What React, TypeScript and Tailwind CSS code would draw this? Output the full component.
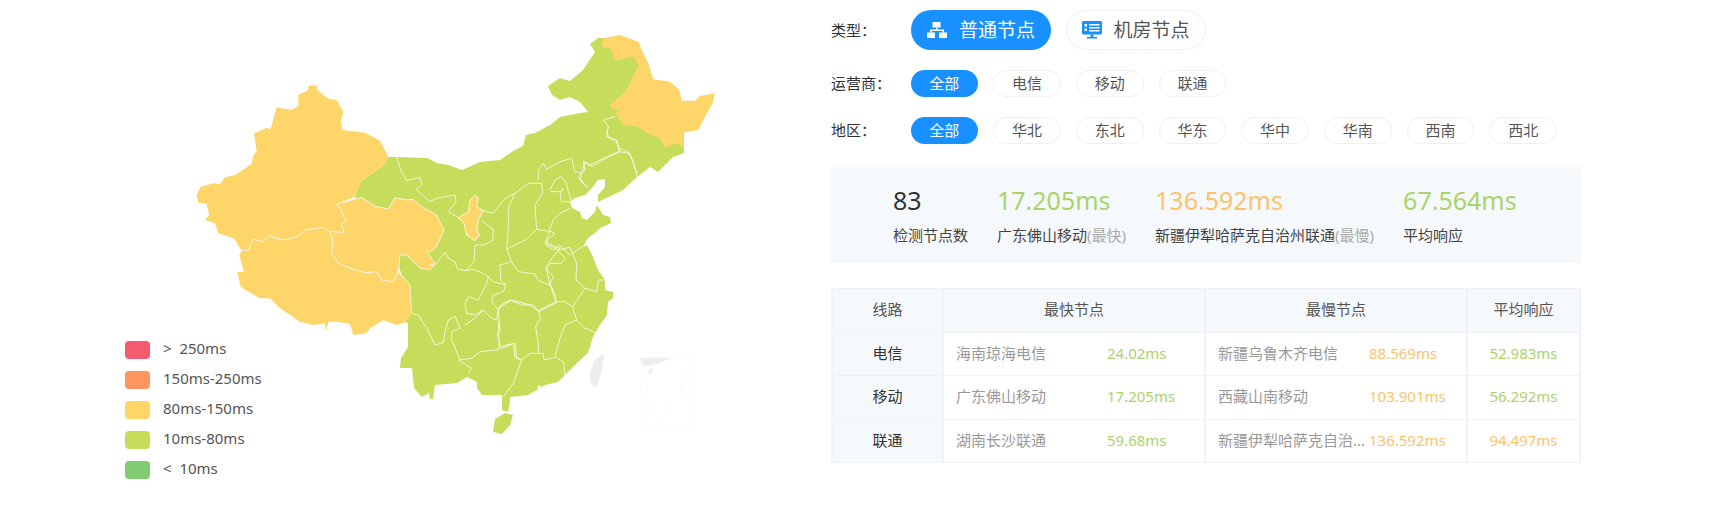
const font = { fontFamily: '"Noto Sans", "Noto Sans CJK SC", sans-serif' }

const LAND =
  "388,157 397,157 427,158 437,163 448,165 462,170 480,162 500,160 510,153 515,150 523,146 526,135 535,133 550,125 560,117 580,113 588,112 580,102 570,97 560,100 552,95 548,86 560,78 570,81 583,70 595,52 590,44 598,38 603,38 620,45 635,50 645,65 650,85 684,130 684,153 673,157 670,160 658,172 650,167 637,177 623,190 598,202 598,195 605,187 605,179 598,180 592,188 585,195 575,198 570,202 572,208 580,212 582,218 587,220 595,212 597,205 603,215 610,217 611,223 600,228 595,233 588,238 583,247 587,245 593,257 598,270 605,280 605,290 613,292 613,298 608,302 607,315 598,328 593,337 588,353 577,363 565,375 558,382 545,385 537,390 528,395 510,397 510,403 508,412 502,410 502,395 493,395 482,395 477,388 477,382 467,377 457,383 435,385 433,399 430,399 429,393 422,397 414,388 412,368 400,368 401,358 408,347 408,323 405,322 410,300 400,270 375,220 355,197 361,181 370,175 384,165"

const HAINAN = "495,419 505,413 513,415 510,425 502,434 493,432"

// west: frame of the crop at 180,20
const XINJIANG =
  "385,197 410,196 412,210 430,225 445,236 470,240 490,275 483,305 487,330 555,338 600,362 625,410 612,435 570,465 545,482 525,530 470,552 480,565 498,602 485,612 493,637 450,635 430,622 375,630 355,648 320,660 285,655 270,645 250,665 220,658 205,690 185,692 165,660 160,655 115,640 105,610 75,600 88,585 80,552 55,548 50,525 62,500 100,490 120,492 135,472 165,465 215,432 220,405 230,395 222,340 262,323 272,328 290,262 335,270 355,258 355,225 385,210"
const TIBET =
  "185,692 205,690 220,658 250,665 270,645 285,655 320,660 355,648 375,630 430,622 450,635 458,660 455,700 475,730 510,745 555,758 590,755 605,780 640,785 655,755 690,795 695,880 680,905 650,915 610,900 570,925 560,940 520,945 510,912 470,905 445,905 438,935 435,910 400,915 360,905 330,885 300,865 270,835 240,835 205,815 182,800 172,755 192,755 178,705"
const QINGHAI =
  "470,552 545,532 575,552 590,560 625,567 645,533 680,540 700,538 725,560 770,585 792,630 770,680 750,695 740,695 765,730 750,750 720,745 680,705 660,705 655,755 640,785 605,780 590,755 555,758 510,745 475,730 455,700 458,660 450,635 493,637 485,612 498,602 480,565"

// north east: frame of the crop at 560,20
const HEILONGJIANG =
  "130,55 180,45 235,65 250,100 265,130 280,178 330,185 358,210 365,242 405,242 420,228 465,220 458,250 435,290 415,330 370,338 372,385 350,370 315,382 300,355 270,345 235,320 190,315 165,280 180,270 160,270 150,255 195,215 205,200 235,135 220,110 165,122 150,85 125,80"
const NE_LINES = [
  "130,300 145,320 140,350 170,365 175,385 180,395 205,400 220,425 232,470",
  "180,395 150,408 95,440 70,425 75,450 55,470 80,500",
  "130,300 165,290",
]

// centre and south west: frame of the crop at 340,150
const NINGXIA =
  "405,135 415,145 410,170 430,182 415,210 410,240 418,255 405,272 380,255 372,220 355,203 385,185 390,150"
const CENTRE_LINES = [
  "170,22 183,62 200,92 240,82 245,105 228,118 270,155 290,145 345,135 348,155 325,185 355,203",
  "270,345 285,345 300,325 315,308 325,325 345,335 352,357 378,362 395,358 420,365 445,380 458,395 498,405 490,425 460,435 455,455 475,480 470,510 455,505 430,480 405,495 380,490 375,460 385,440 415,450 440,400 445,380",
  "378,362 402,335 405,285 430,285 458,272 460,238 425,212",
  "430,182 460,190 495,145 525,130 565,100 605,100 608,130 585,165 590,238 560,268 500,297",
  "525,130 505,175 505,235 500,295 515,335 480,345 482,390 498,405",
  "515,335 535,365 585,372 595,392 630,405 650,458 595,485 580,465 545,465 510,450 482,465 475,480",
  "590,238 630,245 615,278 660,295 640,320 618,350 630,405",
  "475,515 478,590 470,600 420,605 395,625 360,630 350,605 335,570 335,545 360,535 345,498 325,510 315,545 310,578 285,585 260,535 235,495 215,490",
  "375,525 405,505 430,480",
  "355,630 395,655 385,670",
  "470,600 525,580 530,625 545,630 520,700 490,740",
]

// north china: frame of the crop at 520,130
const NORTH_LINES = [
  "55,150 55,120 70,100 80,118 120,95 155,85 165,125 185,130 180,150 205,175",
  "90,180 105,150 122,140 140,160 145,185 155,215 125,215 120,195 130,175 120,185 90,185",
  "185,130 195,95 210,105 240,90 295,65 300,55 330,70 350,130",
  "260,0 265,20 290,30 298,55",
  "150,235 120,250 100,270 88,300 105,312 85,325 78,345 100,360 118,345 150,375 190,348",
]

// south east: frame of the crop at 470,240
const SOUTH_LINES = [
  "232,10 262,30 300,22 310,45 320,70 318,120 345,145 380,155 385,120 405,120",
  "262,30 285,55 275,70 240,70 228,88 250,110 240,130 255,165 258,185 285,185 308,200 345,145",
  "308,200 320,240 345,265 370,275 378,285",
  "320,240 285,255 270,295 255,350 280,365 285,405",
  "258,185 205,212 212,235 197,260 205,310 205,340 220,340 222,360 255,352",
  "85,205 125,180 180,195 205,212",
  "85,205 90,270 82,285 92,320 130,310 135,350 155,360 180,340 205,340",
]

const ISLANDS = [
  "640,358 671,358 660,363 648,366 643,366",
  "650,368 654,369 650,375 648,373",
]

const SEA_MARKS = ["683,368 681,380", "681,385 680,395", "650,412 655,405", "672,402 666,412", "646,385 648,390", "658,424 664,421"]

function Lines({ items }: { items: string[] }) {
  return (
    <>
      {items.map((points) => (
        <polyline key={points} points={points} fill="none" stroke="#fff" strokeOpacity="0.85" strokeWidth="2.6" strokeLinejoin="round" />
      ))}
    </>
  )
}

function ChinaMap() {
  return (
    <svg viewBox="0 0 831 508" className="block h-[508px] w-[831px]">
      <polygon points={LAND} fill="#c5dd5a" />
      <polygon points={HAINAN} fill="#c5dd5a" />
      <g transform="translate(180 20) scale(0.3333)" fill="#fdd568" stroke="#fff" strokeOpacity="0.85" strokeWidth="2.6" strokeLinejoin="round">
        <polygon points={XINJIANG} strokeOpacity="0" />
        <polygon points={TIBET} strokeOpacity="0" />
        <polygon points={QINGHAI} strokeOpacity="0" />
        <polyline fill="none" points="470,552 545,532 575,552 590,560 625,567 645,533 680,540 700,538 725,560 770,585 792,630 770,680 750,695 740,695 765,730 750,750 720,745 680,705 660,705 655,755 640,785 605,780 590,755 555,758 510,745 475,730 455,700 458,660 450,635 493,637 485,612 498,602 480,565 470,552" />
        <polyline fill="none" points="185,692 205,690 220,658 250,665 270,645 285,655 320,660 355,648 375,630 430,622 450,635" />
        <polyline fill="none" points="655,755 690,795 695,880" />
      </g>
      <g transform="translate(560 20) scale(0.3333)">
        <polygon points={HEILONGJIANG} fill="#fdd568" />
        <Lines items={NE_LINES} />
      </g>
      <g transform="translate(340 150) scale(0.3333)">
        <polygon points={NINGXIA} fill="#fdd568" stroke="#fff" strokeWidth="2.6" />
        <Lines items={CENTRE_LINES} />
        <circle cx="598" cy="712" r="6" fill="#eef2f2" />
      </g>
      <g transform="translate(520 130) scale(0.3333)">
        <Lines items={NORTH_LINES} />
      </g>
      <g transform="translate(470 240) scale(0.3333)">
        <Lines items={SOUTH_LINES} />
        <polygon points="395,345 403,345 395,395 378,445 360,425 360,395 375,360" fill="#eeeeee" />
      </g>
      <rect x="640.5" y="357.5" width="51" height="74" fill="none" stroke="#fafafa" />
      {ISLANDS.map((points) => (
        <polygon key={points} points={points} fill="#eeeeee" />
      ))}
      {SEA_MARKS.map((points) => (
        <polyline key={points} points={points} fill="none" stroke="#fbfbfb" />
      ))}
    </svg>
  )
}

const LEGEND = [
  { color: "bg-[#f55a6e]", label: "> 250ms" },
  { color: "bg-[#ff9560]", label: "150ms-250ms" },
  { color: "bg-[#ffd568]", label: "80ms-150ms" },
  { color: "bg-[#c5dd5a]", label: "10ms-80ms" },
  { color: "bg-[#80cc70]", label: "< 10ms" },
]

function Legend() {
  return (
    <div className="absolute left-[125px] top-[341px] flex flex-col gap-[12px]">
      {LEGEND.map((item) => (
        <div key={item.label} className="flex h-[18px] items-center gap-[13px]">
          <span className={`h-[18px] w-[25px] rounded ${item.color}`} />
          <span className="whitespace-pre pb-[4px] text-[15px] text-[#555]">{item.label.replace(" ", "  ")}</span>
        </div>
      ))}
    </div>
  )
}

function Chip({ label, active }: { label: string; active?: boolean }) {
  return (
    <span
      className={
        active
          ? "flex h-[27px] w-[67.7px] items-center justify-center rounded-full bg-[#1890ff] text-[15px] text-white"
          : "flex h-[27px] w-[67.7px] items-center justify-center rounded-full border border-[#f0f0f0] text-[15px] text-[#555]"
      }
    >
      {label}
    </span>
  )
}

function ChipRow({ label, chips }: { label: string; chips: string[] }) {
  return (
    <div className="flex items-center">
      <span className="w-[79.500px] text-[15px] text-[#333]">{label}</span>
      <div className="flex gap-[15px]">
        <Chip label="全部" active />
        {chips.map((chip) => (
          <Chip key={chip} label={chip} />
        ))}
      </div>
    </div>
  )
}

function SitemapIcon() {
  return (
    <svg viewBox="0 0 20 16" className="h-[16px] w-[20px]" fill="currentColor">
      <rect x="5.5" y="0" width="8" height="5.5" />
      <rect x="0" y="10.5" width="8" height="5.5" />
      <rect x="12" y="10.5" width="8" height="5.5" />
      <path d="M9 5.5h1.5V7.5H17v3h-1.5V9h-11v1.500H3v-3h6z" />
    </svg>
  )
}

function MonitorIcon() {
  return (
    <svg viewBox="0 0 20 18" className="h-[18px] w-[20px]">
      <rect x="0" y="0" width="20" height="13.500" rx="1.500" fill="#1890ff" />
      <rect x="8.500" y="13.500" width="3" height="2.500" fill="#1890ff" />
      <rect x="5" y="16" width="10" height="1.500" fill="#1890ff" />
      <rect x="2.500" y="3" width="2.500" height="2.500" fill="#fff" />
      <rect x="2.500" y="7.500" width="2.500" height="2.500" fill="#fff" />
      <rect x="7" y="3" width="10.500" height="1.500" fill="#fff" />
      <rect x="7" y="6" width="10.500" height="1.500" fill="#fff" />
      <rect x="7" y="9" width="10.500" height="1.500" fill="#fff" />
    </svg>
  )
}

const STATS = [
  { value: "83", color: "text-[#333]", name: "检测节点数" },
  { value: "17.205ms", color: "text-[#a9d46a]", name: "广东佛山移动", note: "(最快)" },
  { value: "136.592ms", color: "text-[#fcc36b]", name: "新疆伊犁哈萨克自治州联通", note: "(最慢)" },
  { value: "67.564ms", color: "text-[#a9d46a]", name: "平均响应" },
]

const green = "text-[#a9d46a]"
const orange = "text-[#fcc36b]"

const ROWS = [
  { line: "电信", fast: "海南琼海电信", fastMs: "24.02ms", slow: "新疆乌鲁木齐电信", slowMs: "88.569ms", avg: "52.983ms", avgColor: green },
  { line: "移动", fast: "广东佛山移动", fastMs: "17.205ms", slow: "西藏山南移动", slowMs: "103.901ms", avg: "56.292ms", avgColor: green },
  { line: "联通", fast: "湖南长沙联通", fastMs: "59.68ms", slow: "新疆伊犁哈萨克自治州联通", slowMs: "136.592ms", avg: "94.497ms", avgColor: orange },
]

function NodeCell({ name, ms, color }: { name: string; ms: string; color: string }) {
  return (
    <td className="border-x-2 border-y border-[#f0f2f5] pb-[2px] pl-[12px]">
      <div className="flex items-center">
        <span className="w-[151px] truncate pr-[3px] text-[#999]">{name}</span>
        <span className={color}>{ms}</span>
      </div>
    </td>
  )
}

export default function App() {
  return (
    <div className="flex h-[508px] w-[1717px] bg-white" style={font}>
      <div className="relative w-[831px]">
        <ChinaMap />
        <Legend />
      </div>

      <div className="flex w-[750px] flex-col pt-[10px]">
        <div className="flex items-center">
          <span className="w-[80px] text-[15px] text-[#333]">类型：</span>
          <div className="flex gap-[15px]">
            <span className="flex h-[40px] w-[140px] items-center justify-center gap-[12px] rounded-full bg-[#1890ff] text-[19px] text-white">
              <SitemapIcon />
              普通节点
            </span>
            <span className="flex h-[40px] w-[140px] items-center justify-center gap-[11px] rounded-full border border-[#f0f0f0] text-[19px] text-[#555]">
              <MonitorIcon />
              机房节点
            </span>
          </div>
        </div>

        <div className="mt-[20px]">
          <ChipRow label="运营商：" chips={["电信", "移动", "联通"]} />
        </div>
        <div className="mt-[20px]">
          <ChipRow label="地区：" chips={["华北", "东北", "华东", "华中", "华南", "西南", "西北"]} />
        </div>

        <div className="mt-[23px] flex h-[96px] items-center gap-[29px] bg-[#f6f9fc] pb-[4px] pl-[62px]">
          {STATS.map((stat) => (
            <div key={stat.name} className="flex flex-col">
              <span className={`text-[25px] leading-[36px] ${stat.color}`}>{stat.value}</span>
              <span className="mt-[7px] text-[15px] leading-[20px] text-[#444]">
                {stat.name}
                {stat.note && <span className="text-[#aaa]">{stat.note}</span>}
              </span>
            </div>
          ))}
        </div>

        <table className="mt-[25px] w-[748px] table-fixed border-collapse text-[15px]">
          <colgroup>
            <col className="w-[111px]" />
            <col className="w-[262px]" />
            <col className="w-[262px]" />
            <col className="w-[113px]" />
          </colgroup>
          <thead>
            <tr className="h-[43.500px] bg-[#f6f9fc] text-[#555]">
              {["线路", "最快节点", "最慢节点", "平均响应"].map((head) => (
                <th key={head} className="border-x-2 border-y border-[#f0f2f5] pb-[2px] font-normal">
                  {head}
                </th>
              ))}
            </tr>
          </thead>
          <tbody>
            {ROWS.map((row) => (
              <tr key={row.line} className="h-[43.500px]">
                <td className="border-x-2 border-y border-[#f0f2f5] bg-[#f6f9fc] pb-[2px] text-center text-[#333]">{row.line}</td>
                <NodeCell name={row.fast} ms={row.fastMs} color={green} />
                <NodeCell name={row.slow} ms={row.slowMs} color={orange} />
                <td className={`border-x-2 border-y border-[#f0f2f5] pb-[2px] text-center ${row.avgColor}`}>{row.avg}</td>
              </tr>
            ))}
          </tbody>
        </table>
      </div>
    </div>
  )
}
